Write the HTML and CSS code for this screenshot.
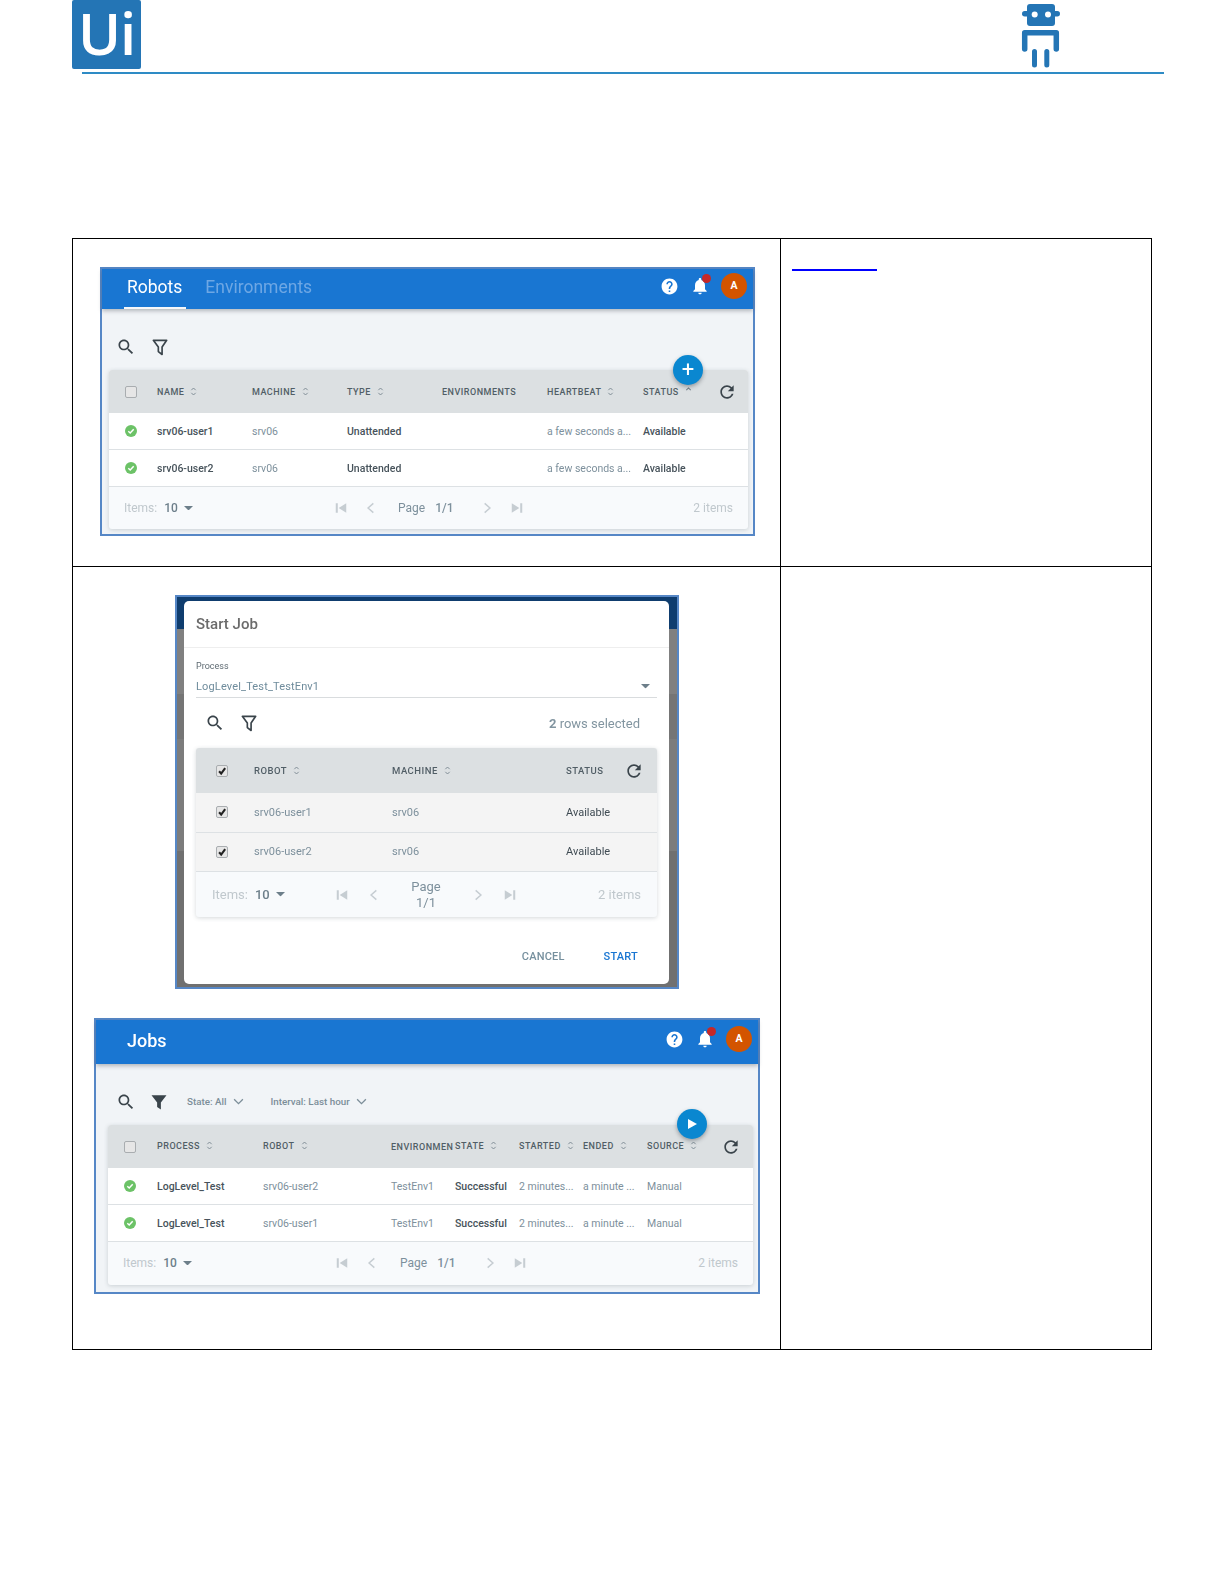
FILE: index.html
```html
<!DOCTYPE html>
<html lang="en">
<head>
<meta charset="utf-8">
<title>Robots and Jobs</title>
<link rel="stylesheet" href="styles.css">
</head>
<body>
<svg class="defs" aria-hidden="true">
  <symbol id="i-search" viewBox="0 0 24 24"><path d="M15.5 14h-.79l-.28-.27C15.41 12.59 16 11.11 16 9.5 16 5.91 13.09 3 9.5 3S3 5.91 3 9.5 5.91 16 9.5 16c1.61 0 3.09-.59 4.23-1.57l.27.28v.79l5 4.99L20.49 19l-4.99-5zm-6 0C7.01 14 5 11.99 5 9.5S7.01 5 9.5 5 14 7.01 14 9.5 11.99 14 9.5 14z"/></symbol>
  <symbol id="i-filter" viewBox="0 0 24 24"><path d="M4 4h16l-5.500 8v9L10 17.500V12z" fill="none" stroke="currentColor" stroke-width="2" stroke-linejoin="round"/></symbol>
  <symbol id="i-filter-on" viewBox="0 0 24 24"><path d="M2 3h20l-7.500 9.500V22l-5-3.500v-6z"/></symbol>
  <symbol id="i-help" viewBox="0 0 24 24"><path d="M12 2C6.480 2 2 6.480 2 12s4.480 10 10 10 10-4.480 10-10S17.520 2 12 2zm1 17h-2v-2h2v2zm2.070-7.750l-.9.920C13.450 12.900 13 13.500 13 15h-2v-.5c0-1.100.45-2.100 1.170-2.830l1.240-1.260c.37-.36.59-.86.59-1.410 0-1.100-.9-2-2-2s-2 .9-2 2H8c0-2.210 1.790-4 4-4s4 1.790 4 4c0 .88-.36 1.680-.93 2.250z"/></symbol>
  <symbol id="i-bell" viewBox="0 0 24 24"><path d="M12 22c1.100 0 2-.9 2-2h-4c0 1.100.89 2 2 2zm6-6v-5c0-3.070-1.640-5.640-4.500-6.320V4c0-.83-.67-1.500-1.500-1.500s-1.500.67-1.500 1.500v.68C7.630 5.360 6 7.920 6 11v5l-2 2v1h16v-1l-2-2z"/></symbol>
  <symbol id="i-refresh" viewBox="0 0 24 24"><path d="M17.650 6.350C16.200 4.900 14.210 4 12 4c-4.420 0-7.990 3.580-7.990 8s3.570 8 7.990 8c3.730 0 6.840-2.550 7.730-6h-2.080c-.82 2.330-3.040 4-5.650 4-3.310 0-6-2.690-6-6s2.690-6 6-6c1.660 0 3.140.69 4.220 1.780L13 11h7V4l-2.350 2.350z"/></symbol>
  <symbol id="i-sort" viewBox="0 0 8 12"><path d="M1.500 4.500 4 2l2.500 2.500M1.500 7.500 4 10l2.500-2.500" fill="none" stroke="currentColor" stroke-width="1"/></symbol>
  <symbol id="i-sort-up" viewBox="0 0 8 12"><path d="M1.500 4.500 4 2l2.500 2.500" fill="none" stroke="currentColor" stroke-width="1.200"/></symbol>
  <symbol id="i-ok" viewBox="0 0 12 12"><circle cx="6" cy="6" r="6" fill="#6cc267"/><path d="M3.300 6.300 5.200 8 8.700 4.300" fill="none" stroke="#fff" stroke-width="1.500"/></symbol>
  <symbol id="i-first" viewBox="0 0 24 24"><path d="M3 4h3.500v16H3zM21 4v16L8 12z"/></symbol>
  <symbol id="i-prev" viewBox="0 0 24 24"><path d="M16 4 7 12l9 8" fill="none" stroke="currentColor" stroke-width="2.500"/></symbol>
  <symbol id="i-next" viewBox="0 0 24 24"><path d="M8 4l9 8-9 8" fill="none" stroke="currentColor" stroke-width="2.500"/></symbol>
  <symbol id="i-last" viewBox="0 0 24 24"><path d="M17.500 4H21v16h-3.500zM3 4v16l13-8z"/></symbol>
  <symbol id="i-caret" viewBox="0 0 10 5"><path d="M0 0h10L5 5z"/></symbol>
  <symbol id="i-chev" viewBox="0 0 12 8"><path d="M1 1.500 6 6.500l5-5" fill="none" stroke="currentColor" stroke-width="1.500"/></symbol>
  <symbol id="i-check" viewBox="0 0 12 12"><path d="M2.500 6.300 5 9l4.800-6.500" fill="none" stroke="#222" stroke-width="2.500"/></symbol>
</svg>

<header class="page-head">
  <div class="logo">Ui</div>
  <svg class="robot" viewBox="1020 2 42 67" aria-hidden="true">
    <rect x="1022" y="11" width="38" height="5.500" rx="2.700" fill="#2475b5"/>
    <rect x="1027" y="4" width="28" height="22" rx="3" fill="#2475b5"/>
    <circle cx="1034.700" cy="14.500" r="3" fill="#fff"/>
    <circle cx="1048" cy="14.500" r="3" fill="#fff"/>
    <path d="M1024.700 49V32.700H1056.300V49" fill="none" stroke="#2475b5" stroke-width="5.500" stroke-linecap="round" stroke-linejoin="round"/>
    <path d="M1034.500 51.500V65M1046.800 51.500V65" fill="none" stroke="#2475b5" stroke-width="5" stroke-linecap="round"/>
  </svg>
</header>
<div class="head-rule"></div>

<main class="doc-table">
  <div class="doc-cell doc-cell--one">
    <section class="shot shot--robots">
      <div class="bar">
        <span class="tab tab--active">Robots</span>
        <span class="tab tab--dim">Environments</span>
        <div class="bar-icons">
          <svg class="ic-help white"><use href="#i-help"/></svg>
          <span class="bell"><svg class="ic18 white"><use href="#i-bell"/></svg><i class="dot"></i></span>
          <span class="avatar">A</span>
        </div>
      </div>
      <div class="toolbar">
        <svg class="ic18 ink"><use href="#i-search"/></svg>
        <svg class="ic18 ink"><use href="#i-filter"/></svg>
      </div>
      <div class="card dt dt--robots">
        <span class="fab">+</span>
        <div class="dt-row dt-head">
          <span class="box"></span>
          <span>NAME <svg class="sort"><use href="#i-sort"/></svg></span>
          <span>MACHINE <svg class="sort"><use href="#i-sort"/></svg></span>
          <span>TYPE <svg class="sort"><use href="#i-sort"/></svg></span>
          <span>ENVIRONMENTS</span>
          <span>HEARTBEAT <svg class="sort"><use href="#i-sort"/></svg></span>
          <span>STATUS <svg class="sort"><use href="#i-sort-up"/></svg></span>
          <svg class="ic18 ink"><use href="#i-refresh"/></svg>
        </div>
        <div class="dt-row">
          <svg class="ok"><use href="#i-ok"/></svg>
          <span class="strong">srv06-user1</span><span class="soft">srv06</span><span class="strong">Unattended</span><span></span><span class="soft">a few seconds a...</span><span class="strong">Available</span>
        </div>
        <div class="dt-row">
          <svg class="ok"><use href="#i-ok"/></svg>
          <span class="strong">srv06-user2</span><span class="soft">srv06</span><span class="strong">Unattended</span><span></span><span class="soft">a few seconds a...</span><span class="strong">Available</span>
        </div>
        <div class="dt-foot">
          <div class="items"><span class="faint">Items:</span><b>10</b><svg class="caret"><use href="#i-caret"/></svg></div>
          <div class="pager">
            <svg class="pg"><use href="#i-first"/></svg><svg class="pg"><use href="#i-prev"/></svg>
            <span class="pg-text">Page <b>1/1</b></span>
            <svg class="pg"><use href="#i-next"/></svg><svg class="pg"><use href="#i-last"/></svg>
          </div>
          <span class="count">2 items</span>
        </div>
      </div>
    </section>
  </div>
  <div class="doc-cell doc-cell--note"><a class="blank-link" href="#"></a></div>

  <div class="doc-cell doc-cell--two">
    <section class="shot shot--dialog">
      <div class="dialog">
        <h2 class="dlg-title">Start Job</h2>
        <div class="field">
          <label class="field-label">Process</label>
          <div class="field-value">LogLevel_Test_TestEnv1<svg class="caret caret--end"><use href="#i-caret"/></svg></div>
        </div>
        <div class="toolbar toolbar--dlg">
          <svg class="ic18 ink"><use href="#i-search"/></svg>
          <svg class="ic18 ink"><use href="#i-filter"/></svg>
          <span class="selected"><b>2</b> rows selected</span>
        </div>
        <div class="card dt dt--dlg">
          <div class="dt-row dt-head">
            <span class="box box--on"><svg><use href="#i-check"/></svg></span>
            <span>ROBOT <svg class="sort"><use href="#i-sort"/></svg></span>
            <span>MACHINE <svg class="sort"><use href="#i-sort"/></svg></span>
            <span>STATUS</span>
            <svg class="ic18 ink"><use href="#i-refresh"/></svg>
          </div>
          <div class="dt-row">
            <span class="box box--on"><svg><use href="#i-check"/></svg></span>
            <span class="soft">srv06-user1</span><span class="soft">srv06</span><span class="strong">Available</span>
          </div>
          <div class="dt-row">
            <span class="box box--on"><svg><use href="#i-check"/></svg></span>
            <span class="soft">srv06-user2</span><span class="soft">srv06</span><span class="strong">Available</span>
          </div>
          <div class="dt-foot">
            <div class="items"><span class="faint">Items:</span><b>10</b><svg class="caret"><use href="#i-caret"/></svg></div>
            <div class="pager">
              <svg class="pg"><use href="#i-first"/></svg><svg class="pg"><use href="#i-prev"/></svg>
              <span class="pg-text">Page<br>1/1</span>
              <svg class="pg"><use href="#i-next"/></svg><svg class="pg"><use href="#i-last"/></svg>
            </div>
            <span class="count">2 items</span>
          </div>
        </div>
        <div class="dlg-actions">
          <span class="btn">CANCEL</span>
          <span class="btn btn--primary">START</span>
        </div>
      </div>
    </section>

    <section class="shot shot--jobs">
      <div class="bar">
        <span class="tab tab--title">Jobs</span>
        <div class="bar-icons">
          <svg class="ic-help white"><use href="#i-help"/></svg>
          <span class="bell"><svg class="ic18 white"><use href="#i-bell"/></svg><i class="dot"></i></span>
          <span class="avatar">A</span>
        </div>
      </div>
      <div class="toolbar toolbar--jobs">
        <svg class="ic18 ink"><use href="#i-search"/></svg>
        <svg class="ic16 ink"><use href="#i-filter-on"/></svg>
        <span class="chip chip--state">State: All <svg class="chev"><use href="#i-chev"/></svg></span>
        <span class="chip">Interval: Last hour <svg class="chev"><use href="#i-chev"/></svg></span>
      </div>
      <div class="card dt dt--jobs">
        <span class="fab fab--play"><svg viewBox="0 0 10 10"><path d="M1 0 10 5 1 10z"/></svg></span>
        <div class="dt-row dt-head">
          <span class="box"></span>
          <span class="lift">PROCESS <svg class="sort"><use href="#i-sort"/></svg></span>
          <span class="lift">ROBOT <svg class="sort"><use href="#i-sort"/></svg></span>
          <span class="clip">ENVIRONMENTS</span>
          <span class="lift">STATE <svg class="sort"><use href="#i-sort"/></svg></span>
          <span class="lift">STARTED <svg class="sort"><use href="#i-sort"/></svg></span>
          <span class="lift">ENDED <svg class="sort"><use href="#i-sort"/></svg></span>
          <span class="lift">SOURCE <svg class="sort"><use href="#i-sort"/></svg></span>
          <svg class="ic18 ink"><use href="#i-refresh"/></svg>
        </div>
        <div class="dt-row">
          <svg class="ok"><use href="#i-ok"/></svg>
          <span class="strong">LogLevel_Test</span><span class="soft">srv06-user2</span><span class="soft">TestEnv1</span><span class="strong">Successful</span><span class="soft">2 minutes...</span><span class="soft">a minute ...</span><span class="soft">Manual</span>
        </div>
        <div class="dt-row">
          <svg class="ok"><use href="#i-ok"/></svg>
          <span class="strong">LogLevel_Test</span><span class="soft">srv06-user1</span><span class="soft">TestEnv1</span><span class="strong">Successful</span><span class="soft">2 minutes...</span><span class="soft">a minute ...</span><span class="soft">Manual</span>
        </div>
        <div class="dt-foot">
          <div class="items"><span class="faint">Items:</span><b>10</b><svg class="caret"><use href="#i-caret"/></svg></div>
          <div class="pager">
            <svg class="pg"><use href="#i-first"/></svg><svg class="pg"><use href="#i-prev"/></svg>
            <span class="pg-text">Page <b>1/1</b></span>
            <svg class="pg"><use href="#i-next"/></svg><svg class="pg"><use href="#i-last"/></svg>
          </div>
          <span class="count">2 items</span>
        </div>
      </div>
    </section>
  </div>
  <div class="doc-cell doc-cell--note"></div>
</main>
</body>
</html>
```
FILE: styles.css
```css
* { box-sizing: border-box; }
html, body { margin: 0; padding: 0; background: #fff; }
body { width: 1224px; height: 1584px; overflow: hidden; font-family: Roboto, "Liberation Sans", sans-serif; color: #3f4b53; }
.defs { display: none; }
svg { display: block; fill: currentColor; }

/* page header */
.page-head { display: flex; justify-content: space-between; height: 72px; padding: 0 162px 0 72px; }
.logo { width: 69px; height: 69px; border-radius: 2px; background: #2475b5; color: #fff; font: 600 58px/66px "Open Sans", sans-serif; text-align: center; letter-spacing: -1px; filter: blur(.4px); }
.robot { width: 42px; height: 67px; margin-top: 2px; filter: blur(.4px); }
.head-rule { width: 1082px; height: 2px; margin-left: 82px; background: #2e8bc5; }

/* document table */
.doc-table { display: grid; grid-template-columns: 708px 371px; grid-template-rows: 328px 783px; width: 1080px; margin: 164px 0 0 72px; border-top: 1px solid #000; border-left: 1px solid #000; }
.doc-cell { border-right: 1px solid #000; border-bottom: 1px solid #000; }
.doc-cell--one { padding: 28px 0 0 27px; }
.doc-cell--two { padding: 28px 0 0 21px; }
.doc-cell--note { padding: 0 0 0 11px; }
.blank-link { display: block; width: 85px; height: 2px; margin-top: 30px; background: #0000ff; }

/* screenshot frames */
.shot { border: 2px solid #5687c6; background: #f1f4f7; filter: blur(.35px); }
.shot--robots { width: 655px; height: 269px; padding: 0 5px 0 0; }
.shot--jobs { width: 666px; height: 276px; margin-top: 29px; }
.shot--dialog { width: 504px; height: 394px; margin-left: 81px; padding: 4px 8px 3px 7px; background: linear-gradient(#0f3d6e 0 32px, #808080 32px 97px, #757575 97px 142px, #7c7c7c 142px 254px, #707070 254px); }

.bar { display: flex; align-items: center; height: 40px; background: #1976d2; box-shadow: 0 2px 4px rgba(60, 70, 80, .35); position: relative; }
.shot--robots .bar { margin-right: -5px; padding-right: 6px; }
.shot--jobs .bar { height: 44px; padding-right: 6px; }
.tab { font-size: 17.500px; line-height: 36px; height: 40px; color: #fff; }
.tab--active { margin-left: 22px; padding: 0 4px 0 3px; border-bottom: 2px solid #f5f7fa; }
.tab--dim { margin-left: 19px; color: #6ea7e4; }
.tab--title { margin-left: 31px; font-size: 18px; font-weight: 500; line-height: 42px; height: 44px; }
.bar-icons { display: flex; align-items: center; gap: 11px; margin: 0 0 6px auto; }
.ic-help { width: 19px; height: 19px; flex: none; }
.ic16 { width: 18px; height: 18px; flex: none; }
.ic18 { width: 20px; height: 20px; flex: none; }
.white { color: #fff; }
.ink { color: #3a444b; }
.bell { position: relative; width: 20px; }
.dot { position: absolute; top: -2px; right: -1px; width: 9px; height: 9px; border-radius: 50%; background: #c62828; }
.avatar { width: 26px; height: 26px; border-radius: 50%; background: #d35400; color: #fff; font-size: 10.500px; font-weight: 700; line-height: 26px; text-align: center; }

.toolbar { display: flex; align-items: flex-start; gap: 14px; height: 61px; padding: 28px 0 0 14px; }
.toolbar--jobs { height: 61px; gap: 14px; align-items: center; padding: 14px 0 0 20px; }
.toolbar--dlg { align-items: center; gap: 14px; height: 50px; padding: 0 17px 0 9px; margin: 0 12px; }
.selected { margin-left: auto; font-size: 13px; color: #8295a0; }
.selected b { font-weight: 700; }
.chip { display: flex; align-items: center; gap: 6px; font-size: 9.800px; font-weight: 500; color: #7c8e99; }
.chip--state { margin-left: 5px; margin-right: 13px; }
.chev { width: 11px; height: 7px; color: #7c8e99; }

/* data tables */
.card { position: relative; border-radius: 3px; background: #f8fafc; box-shadow: 0 1px 4px rgba(70, 80, 90, .22); }
.shot--robots .card { margin-left: 7px; height: 159px; }
.shot--jobs .card { margin: 0 5px 0 12px; height: 160px; }
.dt-row { display: grid; align-items: center; height: 37px; padding-left: 16px; background: #fff; border-bottom: 1px solid #dde1e4; font-size: 10.500px; white-space: nowrap; }
.dt-row > * { min-width: 0; }
.dt-head { height: 43px; background: #dce0e2; border-bottom: 0; border-radius: 3px 3px 0 0; font-size: 9px; font-weight: 500; letter-spacing: .5px; color: #515e66; }
.dt-head > span { display: flex; align-items: center; gap: 6px; }
.dt--robots .dt-row { grid-template-columns: 32px 95px 95px 95px 105px 96px 74px 22px; }
.dt--jobs .dt-row { grid-template-columns: 33px 106px 128px 64px 64px 64px 64px 74px 22px; }
.dt--dlg .dt-row { grid-template-columns: 38px 138px 174px 58px 22px; height: 39.500px; padding-left: 20px; background: #f4f4f4; font-size: 11px; }
.dt--dlg .dt-head { height: 45px; background: #dce0e2; font-size: 9.500px; }
.dt--jobs .dt-head { height: 43px; }
.lift { margin-bottom: 2px; }
.strong { color: #47535b; font-weight: 500; }
.dt--dlg .strong { font-weight: 400; color: #3f4b53; }
.soft { color: #7d909c; }
.clip { overflow: hidden; margin-right: 2px; }
.sort { width: 7px; height: 11px; color: #74828b; flex: none; }
.ok { width: 12px; height: 12px; }
.box { display: block; width: 12px; height: 12px; border: 1px solid #a9adb0; border-radius: 2px; background: #e6e6e6; }
.box--on svg { width: 10px; height: 10px; }

.dt-foot { display: grid; grid-template-columns: 210px auto 1fr; align-items: center; height: 42px; padding: 0 15px; font-size: 12px; color: #7d909c; }
.dt--jobs .dt-foot { grid-template-columns: 212px auto 1fr; height: 42px; }
.dt--dlg .dt-foot { grid-template-columns: 123px auto 1fr; height: 45px; padding: 0 16px; font-size: 13px; }
.items { display: flex; align-items: center; }
.faint { color: #c0c8cd; }
.items b { margin-left: 7px; font-weight: 500; color: #6d7f8a; }
.caret { width: 9px; height: 4.500px; margin-left: 6px; color: #6d7f8a; }
.pager { display: flex; align-items: center; gap: 16px; color: #c6cdd2; }
.dt--dlg .pager { gap: 18px; }
.pg { width: 14px; height: 14px; }
.pg-text { margin: 0 11px 0 4px; color: #7d909c; white-space: nowrap; }
.pg-text b { margin-left: 7px; font-weight: 500; }
.dt--jobs .pg-text { margin: 0 12px 0 5px; }
.dt--dlg .pg-text { margin: 0 7px; width: 40px; text-align: center; line-height: 16px; }
.count { justify-self: end; color: #c0c8cd; }
.fab { position: absolute; z-index: 1; left: 564px; top: -15px; width: 30px; height: 30px; border-radius: 50%; background: #0a87d0; box-shadow: 0 2px 4px rgba(40, 50, 60, .4); color: #fff; font-size: 22px; line-height: 29px; text-align: center; }
.fab--play { left: 569px; top: -16px; display: flex; align-items: center; justify-content: center; }
.fab--play svg { width: 10px; height: 10px; }

/* dialog */
.dialog { display: flex; flex-direction: column; height: 383px; border-radius: 5px; background: #fff; }
.dlg-title { margin: 0; height: 47px; padding: 0 12px; border-bottom: 1px solid #eee; font-size: 15px; font-weight: 500; line-height: 46px; color: #6b6b6b; }
.field { margin: 0 12px; height: 50px; padding-top: 13px; border-bottom: 1px solid #d9dcde; }
.field-label { display: block; font-size: 9px; line-height: 11px; color: #5f6b73; }
.field-value { display: flex; align-items: center; justify-content: space-between; margin-top: 8px; padding-right: 7px; font-size: 11px; letter-spacing: .15px; color: #6f8c9c; }
.caret--end { color: #6d7f8a; }
.dt--dlg { margin: 0 12px; }
.dlg-actions { display: flex; justify-content: flex-end; gap: 39px; padding: 33px 31px 0 0; }
.btn { font-size: 11px; font-weight: 500; letter-spacing: .2px; color: #76909e; }
.btn--primary { color: #1976d2; }
```
